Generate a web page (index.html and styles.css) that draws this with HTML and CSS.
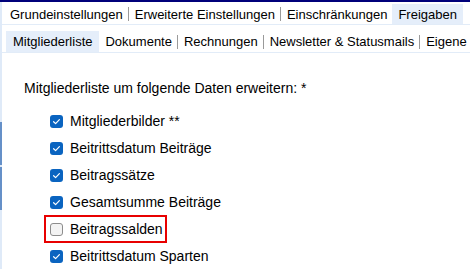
FILE: index.html
```html
<!DOCTYPE html>
<html lang="de">
<head>
<meta charset="utf-8">
<title>Freigaben</title>
<link rel="stylesheet" href="styles.css">
</head>
<body>
<div class="page">
  <div class="topbar"></div>
  <div class="tabs tabs1">
    <span class="tab">Grundeinstellungen</span>
    <span class="sep"></span>
    <span class="tab">Erweiterte Einstellungen</span>
    <span class="sep"></span>
    <span class="tab">Einschränkungen</span>
    <span class="tab active">Freigaben</span>
  </div>
  <div class="tabs tabs2">
    <span class="tab active">Mitgliederliste</span>
    <span class="tab">Dokumente</span>
    <span class="sep"></span>
    <span class="tab">Rechnungen</span>
    <span class="sep"></span>
    <span class="tab">Newsletter &amp; Statusmails</span>
    <span class="sep"></span>
    <span class="tab">Eigene</span>
  </div>
  <div class="content">
    <p class="heading">Mitgliederliste um folgende Daten erweitern: *</p>
    <ul class="options">
      <li class="item"><span class="cb checked"><svg viewBox="0 0 13 13" width="13" height="13"><path d="M3.6 6.7 L5.6 8.6 L9.4 4.6" fill="none" stroke="#fff" stroke-width="1.2" stroke-linecap="round" stroke-linejoin="round"/></svg></span><span class="lbl">Mitgliederbilder **</span></li>
      <li class="item"><span class="cb checked"><svg viewBox="0 0 13 13" width="13" height="13"><path d="M3.6 6.7 L5.6 8.6 L9.4 4.6" fill="none" stroke="#fff" stroke-width="1.2" stroke-linecap="round" stroke-linejoin="round"/></svg></span><span class="lbl">Beitrittsdatum Beiträge</span></li>
      <li class="item"><span class="cb checked"><svg viewBox="0 0 13 13" width="13" height="13"><path d="M3.6 6.7 L5.6 8.6 L9.4 4.6" fill="none" stroke="#fff" stroke-width="1.2" stroke-linecap="round" stroke-linejoin="round"/></svg></span><span class="lbl">Beitragssätze</span></li>
      <li class="item"><span class="cb checked"><svg viewBox="0 0 13 13" width="13" height="13"><path d="M3.6 6.7 L5.6 8.6 L9.4 4.6" fill="none" stroke="#fff" stroke-width="1.2" stroke-linecap="round" stroke-linejoin="round"/></svg></span><span class="lbl">Gesamtsumme Beiträge</span></li>
      <li class="item highlight"><span class="cb"></span><span class="lbl">Beitragssalden</span></li>
      <li class="item"><span class="cb checked"><svg viewBox="0 0 13 13" width="13" height="13"><path d="M3.6 6.7 L5.6 8.6 L9.4 4.6" fill="none" stroke="#fff" stroke-width="1.2" stroke-linecap="round" stroke-linejoin="round"/></svg></span><span class="lbl">Beitrittsdatum Sparten</span></li>
    </ul>
  </div>
</div>
</body>
</html>
```
FILE: styles.css
```css
html, body {
  margin: 0;
  padding: 0;
  background: #fff;
}
body {
  font-family: "Liberation Sans", Arial, sans-serif;
  font-size: 13px;
  color: #000;
  width: 470px;
  height: 269px;
  overflow: hidden;
}
.page {
  height: 269px;
  background:
    linear-gradient(to bottom,
      #dfeaf8 0, #dfeaf8 122px,
      #6590c8 122px, #6590c8 165px,
      #dfeaf8 165px, #dfeaf8 167px,
      #6590c8 167px, #6590c8 210px,
      #dfeaf8 210px, #dfeaf8 100%) left top / 2px 100% no-repeat,
    #fff;
}
.topbar {
  height: 2px;
  background: #00007a;
}
.tabs {
  display: flex;
  align-items: center;
  border-bottom: 1px solid #e2ecf8;
  margin-left: 2px;
}
.tabs1 {
  margin-top: 2px;
  height: 20px;
  padding-left: 2px;
}
.tabs2 {
  margin-top: 6px;
  height: 21px;
  padding-left: 4px;
}
.tab {
  display: flex;
  align-items: center;
  height: 100%;
  padding: 0 5px 0 6px;
  white-space: nowrap;
  line-height: 15px;
}
.tab.active {
  background: #e5eefa;
  padding: 0 6px 0 6px;
}
.tabs2 .tab.active {
  padding: 0 7px 0 7px;
}
.sep {
  width: 1px;
  height: 14px;
  background: #9a9a9a;
  flex: none;
}
.content {
  padding-left: 24px;
  font-size: 14px;
}
.heading {
  margin: 27px 0 0 0;
  line-height: 16px;
}
.options {
  list-style: none;
  margin: 13px 0 0 22px;
  padding: 0;
  display: flex;
  flex-direction: column;
  gap: 3px;
}
.item {
  display: flex;
  align-items: center;
  width: fit-content;
  height: 24px;
  padding: 0 2px 0 4px;
  gap: 7px;
  line-height: 16px;
}
.item.highlight {
  outline: 2px solid #e80000;
}
.cb {
  width: 13px;
  height: 13px;
  box-sizing: border-box;
  border-radius: 3px;
  flex: none;
  display: block;
}
.cb svg {
  display: block;
}
.cb.checked {
  background: #0a64c0;
}
.cb:not(.checked) {
  background: #f3f3f3;
  border: 1px solid #8c8c8c;
}
.lbl {
  white-space: nowrap;
}
```
